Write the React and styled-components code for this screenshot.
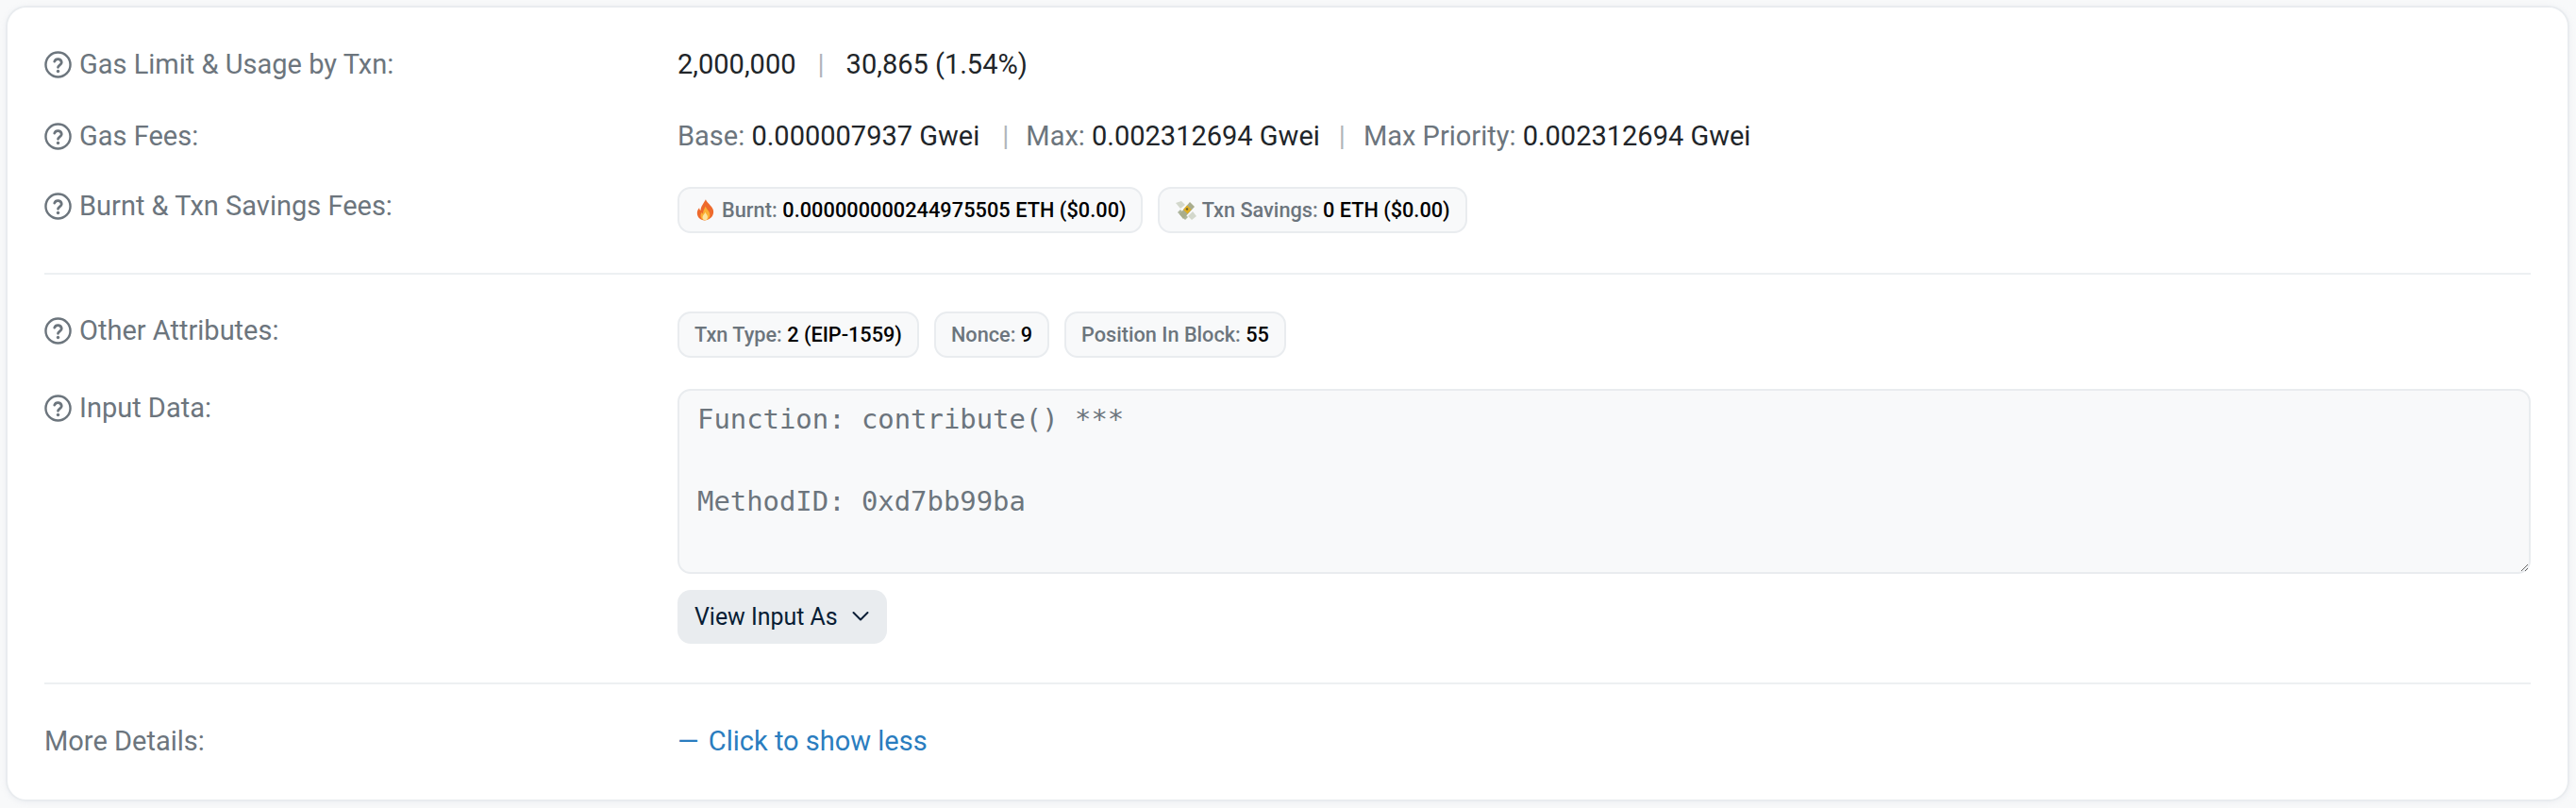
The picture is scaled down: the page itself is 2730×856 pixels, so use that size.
import React from 'react';
import styled, { createGlobalStyle } from 'styled-components';

const GlobalStyle = createGlobalStyle`
  html, body {
    margin: 0;
    padding: 0;
    background: #f8f9fa;
  }
  body {
    font-family: "Roboto", "Liberation Sans", sans-serif;
  }
`;

const Page = styled.div`
  box-sizing: border-box;
  width: 2730px;
  height: 856px;
  padding: 6px 7px 7px 6px;
`;

const Card = styled.section`
  box-sizing: border-box;
  height: 843px;
  padding: 0 39px 0 39px;
  background: #ffffff;
  border: 2px solid #e9ecef;
  border-radius: 22px;
  box-shadow: 0 1px 6px rgba(189, 197, 209, 0.2);
`;

const Row = styled.div`
  display: grid;
  grid-template-columns: 671px 1fr;
  align-items: start;
  height: ${(p) => p.$height}px;
  padding-top: ${(p) => p.$top}px;
  box-sizing: border-box;
`;

const Label = styled.div`
  display: flex;
  align-items: center;
  gap: 8px;
  height: 40px;
  font-size: 29px;
  line-height: 40px;
  color: #6c757d;
  white-space: pre;
`;

const Value = styled.div`
  display: flex;
  align-items: center;
  height: 40px;
  font-size: 29px;
  line-height: 40px;
  color: #212529;
  white-space: pre;
`;

const Muted = styled.span`
  color: #6c757d;
`;

const Pipe = styled.span`
  color: #b0b5ba;
  margin: 0 ${(p) => p.$right}px 0 ${(p) => p.$left}px;
`;

const Divider = styled.hr`
  margin: 0;
  border: 0;
  height: 2px;
  background: #e9ecef;
  opacity: 0.8;
`;

const PillRow = styled.div`
  display: flex;
  gap: 16px;
`;

const Pill = styled.div`
  box-sizing: border-box;
  display: flex;
  align-items: center;
  gap: 5px;
  height: 49px;
  padding: 0 ${(p) => p.$padRight || 16}px 0 16px;
  font-size: 21.7px;
  font-weight: 500;
  letter-spacing: ${(p) => p.$spacing || 0}px;
  color: #000000;
  white-space: pre;
  background: #f8f9fa;
  border: 2px solid #e9ecef;
  border-radius: 14px;
`;

const PillLabel = styled.span`
  color: #6c757d;
`;

const InputColumn = styled.div`
  display: flex;
  flex-direction: column;
  align-items: flex-start;
  gap: 17px;
`;

const InputData = styled.textarea`
  box-sizing: border-box;
  display: block;
  width: 100%;
  height: 196px;
  margin: 0;
  padding: 9px 19px;
  font-family: "DejaVu Sans Mono", "Liberation Mono", monospace;
  font-size: 28.9px;
  line-height: 43.5px;
  color: #6c757d;
  background: #f8f9fa;
  border: 2px solid #e9ecef;
  border-radius: 14px;
  outline: none;
  resize: both;
`;

const ViewButton = styled.button`
  box-sizing: border-box;
  display: flex;
  align-items: center;
  gap: 15px;
  height: 57px;
  width: 222px;
  padding: 0 18px;
  font-family: inherit;
  font-size: 24.9px;
  color: #081d35;
  background: #e9ecef;
  border: 0;
  border-radius: 14px;
`;

const ShowLess = styled.a`
  display: flex;
  align-items: center;
  height: 40px;
  font-size: 29px;
  line-height: 40px;
  color: #2a7dbf;
  white-space: pre;
`;

const Dash = styled.span`
  margin-right: 3px;
`;

const FireSvg = styled.svg`
  margin: 0 3px 0 2px;
`;

const HelpIcon = () => (
  <svg width="29" height="29" viewBox="0 0 24 24" fill="none" stroke="#6c757d" strokeWidth="2" strokeLinecap="round" strokeLinejoin="round">
    <circle cx="12" cy="12" r="10.8" />
    <path d="M8.900 9.200a3.200 3.200 0 0 1 6.200.9c0 2.100-3.100 2.700-3.100 4.200" strokeWidth="2.300" />
    <path d="M12 17.800h.01" strokeWidth="2.800" />
  </svg>
);

const Chevron = () => (
  <svg width="18" height="18" viewBox="0 0 18 18" fill="none" stroke="#081d35" strokeWidth="2" strokeLinecap="round" strokeLinejoin="round">
    <path d="M1.500 4 9 11.500 16.500 4" />
  </svg>
);

const FireIcon = () => (
  <FireSvg width="19" height="23" viewBox="0 0 21 25">
    <path d="M11 0c1 4 7 7 8.600 12 1.500 5-1 11-8.600 12.500C4 25 .4 20 1 15c.3-2.500 1.500-4 2.500-5 0 1.500.6 2.600 1.500 3C5 8 8.500 5 11 0z" fill="#ee6a2c" />
    <path d="M10.800 8c.5 3 4.700 5.500 5 9.500.3 4-2.500 7-5.500 7s-5.600-2.500-5.300-6c.1-1.500.8-2.500 1.500-3.200.2 1 .7 1.500 1.300 1.800C7.500 13.500 9.500 11 10.800 8z" fill="#fbb034" />
    <path d="M10.500 15c.3 1.800 2.700 3 2.700 5.500s-1.300 4-3 4-3-1.300-3-3.300c0-2.500 2.500-3.700 3.300-6.200z" fill="#fde3a0" />
  </FireSvg>
);

const MoneyIcon = () => (
  <svg width="24" height="24" viewBox="0 0 24 24">
    <path d="M1 4 7 2l4 4-5 4z" fill="#d3d8cc" />
    <path d="M23 18l-5 4-4-4 5-5z" fill="#d3d8cc" />
    <path d="M3 14l3-3 8 8-3 3z" fill="#aeb69e" />
    <path d="M5 16 16 3l5 5L9 21z" fill="#a9ad8c" />
    <path d="M9 11l4-4.500 4.500 4.500-4 4.500z" fill="#e0ae22" />
    <path d="M11.500 10.500l1.500-1.500 1.500 1.500-1.500 1.500z" fill="#5f5c34" />
  </svg>
);

const App = () => (
  <Page>
    <GlobalStyle />
    <Card>
      <Row $height={88} $top={40}>
        <Label><HelpIcon />Gas Limit &amp; Usage by Txn:</Label>
        <Value>2,000,000<Pipe $left={23} $right={23}>|</Pipe>30,865 (1.54%)</Value>
      </Row>
      <Row $height={76} $top={28}>
        <Label><HelpIcon />Gas Fees:</Label>
        <Value>
          <Muted>Base: </Muted>0.000007937 Gwei<Pipe $left={24} $right={18}>|</Pipe>
          <Muted>Max: </Muted>0.002312694 Gwei<Pipe $left={20} $right={19}>|</Pipe>
          <Muted>Max Priority: </Muted>0.002312694 Gwei
        </Value>
      </Row>
      <Row $height={117} $top={26}>
        <Label><HelpIcon />Burnt &amp; Txn Savings Fees:</Label>
        <PillRow>
          <Pill $spacing={0.06} $padRight={15}><FireIcon /><span><PillLabel>Burnt: </PillLabel>0.000000000244975505 ETH ($0.00)</span></Pill>
          <Pill><MoneyIcon /><span><PillLabel>Txn Savings: </PillLabel>0 ETH ($0.00)</span></Pill>
        </PillRow>
      </Row>
      <Divider />
      <Row $height={121} $top={39}>
        <Label><HelpIcon />Other Attributes:</Label>
        <PillRow>
          <Pill><span><PillLabel>Txn Type: </PillLabel>2 (EIP-1559)</span></Pill>
          <Pill><span><PillLabel>Nonce: </PillLabel>9</span></Pill>
          <Pill><span><PillLabel>Position In Block: </PillLabel>55</span></Pill>
        </PillRow>
      </Row>
      <Row $height={311} $top={0}>
        <Label><HelpIcon />Input Data:</Label>
        <InputColumn>
          <InputData readOnly defaultValue={'Function: contribute() ***\n\nMethodID: 0xd7bb99ba'} />
          <ViewButton>View Input As<Chevron /></ViewButton>
        </InputColumn>
      </Row>
      <Divider />
      <Row $height={110} $top={40}>
        <Label>More Details:</Label>
        <ShowLess><Dash>—</Dash> Click to show less</ShowLess>
      </Row>
    </Card>
  </Page>
);

export default App;
